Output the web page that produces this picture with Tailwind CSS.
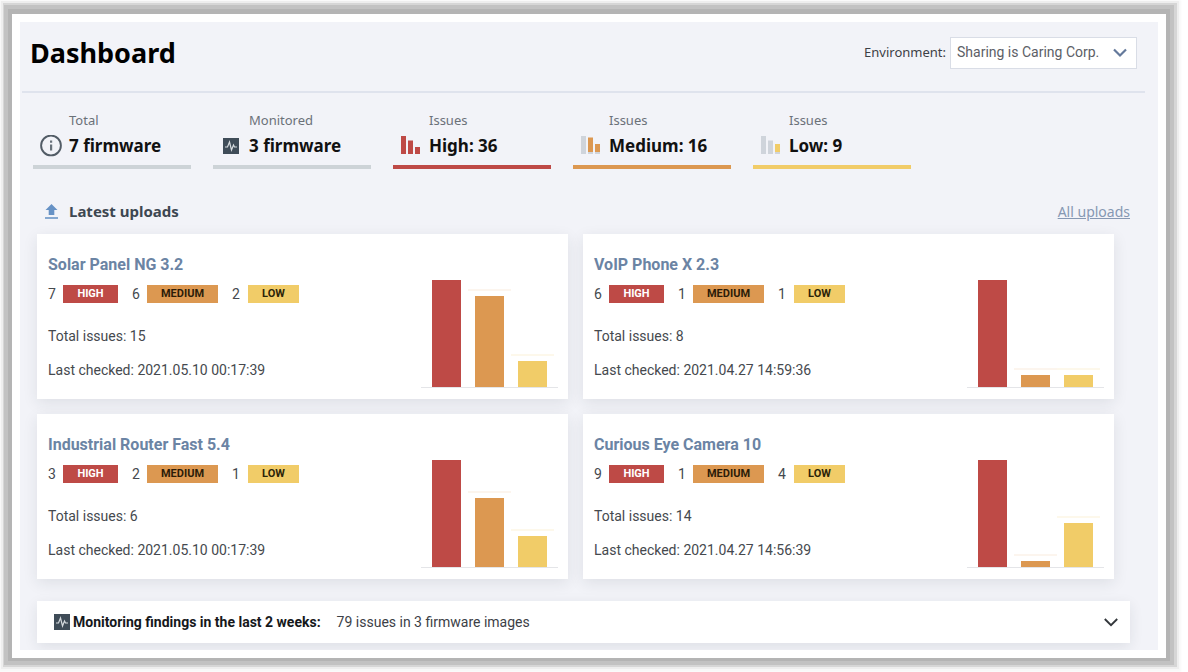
<!DOCTYPE html>
<html lang="en">
<head>
<meta charset="utf-8">
<meta name="viewport" content="width=device-width, initial-scale=1">
<title>Dashboard</title>
<script src="https://cdn.jsdelivr.net/npm/@tailwindcss/browser@4"></script>
</head>
<body class="bg-white font-['Noto_Sans','Open_Sans',sans-serif] text-[#3a4550]">
<div class="mt-[14px] mr-[22px] mb-[14px] ml-3 bg-white p-2 shadow-[0_-1px_0_4px_#b4b4b4,0_-1px_0_8px_#c2c2c2,1px_-1px_0_10px_#d6d6d6,1px_-1px_0_12px_#eeeeee,1px_0_2px_14px_#f8f8f8]">
  <main class="overflow-hidden bg-[#f2f3f8] pb-[7px]">
    <header class="mr-[13px] ml-0.5 flex h-[71px] items-center justify-between border-b-2 border-[#dfe3ed] pr-2 pb-2 pl-2">
      <h1 class="text-[27px] leading-9 font-bold text-black">Dashboard</h1>
      <div class="flex items-center gap-1">
        <label for="env" class="text-[13px] text-[#3c4046]">Environment:</label>
        <div class="relative">
          <select id="env" class="h-8 w-[187px] appearance-none border border-[#d9dde6] bg-white pr-8 pl-1.5 font-[Roboto,sans-serif] text-[14px] text-[#5c6066]">
            <option>Sharing is Caring Corp.</option>
          </select>
          <svg class="pointer-events-none absolute top-[11px] right-2.5 h-2.5 w-[14px]" viewBox="0 0 14 10" fill="none" stroke="#64799b" stroke-width="2.2" aria-hidden="true"><path d="M1 1.5 7 7.5 13 1.5"/></svg>
        </div>
      </div>
    </header>

    <section class="mt-[17px] ml-[13px] flex gap-[22px]" aria-label="Summary">
      <div class="h-[59px] w-[158px] border-b-4 border-[#cdd3d7] pl-9">
        <p class="text-[13px] leading-5 text-[#6b7178]">Total</p>
        <div class="-ml-7 flex h-[31px] items-center">
          <svg class="mr-1.5 -ml-px h-[22px] w-[23px]" viewBox="0 0 23 22" aria-hidden="true"><circle cx="11" cy="10.500" r="9.900" fill="none" stroke="#525c66" stroke-width="1.900"/><path d="M10 5.500H12.200V7.700H10ZM10 9.400H12.200V15.500H10Z" fill="#68727b"/></svg>
          <strong class="text-[17px] text-[#111]">7 firmware</strong>
        </div>
      </div>
      <div class="h-[59px] w-[158px] border-b-4 border-[#cdd3d7] pl-9">
        <p class="text-[13px] leading-5 text-[#6b7178]">Monitored</p>
        <div class="-ml-7 flex h-[31px] items-center">
          <svg class="mr-2.5 ml-0.5 h-4 w-4" viewBox="0 0 16 16" aria-hidden="true"><path fill="#3f4c58" d="M0 0H16V16H0Z"/><path d="M2 9H4.500L6.500 4 8.500 12 10.500 7 11.500 9H14" fill="none" stroke="#d5dade" stroke-width="1.200"/></svg>
          <strong class="text-[17px] text-[#111]">3 firmware</strong>
        </div>
      </div>
      <div class="h-[59px] w-[158px] border-b-4 border-[#be4a46] pl-9">
        <p class="text-[13px] leading-5 text-[#6b7178]">Issues</p>
        <div class="-ml-7 flex h-[31px] items-center">
          <svg class="mr-[9px] h-[19px] w-[19px]" viewBox="0 0 19 19" aria-hidden="true"><path fill="#be4a46" d="M0 0H5V18H0ZM7 4.500H12V18H7ZM14 11H19V18H14Z"/></svg>
          <strong class="text-[17px] text-[#111]">High: 36</strong>
        </div>
      </div>
      <div class="h-[59px] w-[158px] border-b-4 border-[#dc9851] pl-9">
        <p class="text-[13px] leading-5 text-[#6b7178]">Issues</p>
        <div class="-ml-7 flex h-[31px] items-center">
          <svg class="mr-[9px] h-[19px] w-[19px]" viewBox="0 0 19 19" aria-hidden="true"><path fill="#cfd4db" d="M0 0H5V18H0ZM7 4.500H12V18H7ZM14 11H19V18H14Z"/><path fill="#dc9851" d="M7 1.500H12V16H7ZM14 8H19V16H14Z"/></svg>
          <strong class="text-[17px] text-[#111]">Medium: 16</strong>
        </div>
      </div>
      <div class="h-[59px] w-[158px] border-b-4 border-[#f1cc68] pl-9">
        <p class="text-[13px] leading-5 text-[#6b7178]">Issues</p>
        <div class="-ml-7 flex h-[31px] items-center">
          <svg class="mr-[9px] h-[19px] w-[19px]" viewBox="0 0 19 19" aria-hidden="true"><path fill="#cfd4db" d="M0 0H5V18H0ZM7 4.500H12V18H7ZM14 11H19V18H14Z"/><path fill="#f1cc68" d="M14 8H19V16H14Z"/></svg>
          <strong class="text-[17px] text-[#111]">Low: 9</strong>
        </div>
      </div>
    </section>

    <div class="mt-[30px] mr-7 mb-[11px] ml-[25px] flex h-6 items-center">
      <svg class="h-[15px] w-[13px]" viewBox="0 0 13 15" aria-hidden="true"><path fill="#6792c5" d="M6.500 0 12.500 6H9.300V11H3.700V6H.5Z"/><path fill="#86a8d0" d="M0 13H13V15H0Z"/></svg>
      <h2 class="ml-[11px] text-[15px] font-bold text-[#3d4751]">Latest uploads</h2>
      <a href="#" class="ml-auto text-[14px] text-[#8698b3] underline">All uploads</a>
    </div>

    <section id="cards" class="mr-11 ml-[17px] grid grid-cols-2 gap-[15px] font-[Roboto,sans-serif]" aria-label="Latest uploads"></section>

    <button type="button" class="mt-[22px] mr-7 ml-[17px] flex h-[42px] w-[calc(100%-45px)] items-center bg-white pr-3 pl-[17px] text-left font-[Roboto,sans-serif] text-[14px] text-[#3c4046] shadow-[0_4px_14px_#1f293718]">
      <svg class="h-4 w-4" viewBox="0 0 16 16" aria-hidden="true"><path fill="#3f4c58" d="M0 0H16V16H0Z"/><path d="M2 9H4.500L6.500 4 8.500 12 10.500 7 11.500 9H14" fill="none" stroke="#d5dade" stroke-width="1.200"/></svg>
      <strong class="ml-[3px] text-[#15181b]">Monitoring findings in the last 2 weeks:</strong>
      <span class="ml-4">79 issues in 3 firmware images</span>
      <svg class="ml-auto h-[9px] w-[14px]" viewBox="0 0 14 9" fill="none" stroke="#33373b" stroke-width="1.900" aria-hidden="true"><path d="M.8 1 7 7.200 13.200 1"/></svg>
    </button>
  </main>
</div>

<template id="card">
  <article class="flex h-[165px] items-end justify-between bg-white pr-2.5 pl-[11px] shadow-[0_4px_14px_#1f293718]">
    <div class="self-start pt-[19px] text-[14px] leading-6 text-[#45494e]">
      <h3 class="text-[16px] leading-6 font-bold text-[#6b84a4]"><a href="#" data-f="name"></a></h3>
      <div class="mt-2 flex h-[18px] items-center">
        <span class="w-[15px]" data-f="high"></span><span class="h-[18px] w-[55px] bg-[#be4a46] text-center text-[11px] leading-[18px] font-bold text-white">HIGH</span>
        <span class="ml-[14px] w-[15px]" data-f="medium"></span><span class="h-[18px] w-[71px] bg-[#dc9851] text-center text-[11px] leading-[18px] font-bold text-[#2c1c08]">MEDIUM</span>
        <span class="ml-[14px] w-4" data-f="low"></span><span class="h-[18px] w-[51px] bg-[#f1cc68] text-center text-[11px] leading-[18px] font-bold text-[#2c2408]">LOW</span>
      </div>
      <p class="mt-[21px]">Total issues: <span data-f="total"></span></p>
      <p class="mt-2.5">Last checked: <span data-f="checked"></span></p>
    </div>
    <div class="mb-[11px] flex h-[120px] w-[137px] items-end justify-center border-b border-[#e4e5e8]" aria-hidden="true">
      <div class="flex w-[43px] justify-center"><div data-bar class="w-[29px] bg-[#be4a46]"></div></div>
      <div class="flex w-[43px] justify-center border-t-2 border-[#fcf5ee] pt-[5px]"><div data-bar class="w-[29px] bg-[#dc9851]"></div></div>
      <div class="flex w-[43px] justify-center border-t-2 border-[#fdf8eb] pt-[5px]"><div data-bar class="w-[29px] bg-[#f1cc68]"></div></div>
    </div>
  </article>
</template>

<script>
  const uploads = [
    { name: 'Solar Panel NG 3.2', high: 7, medium: 6, low: 2, total: 15, checked: '2021.05.10 00:17:39', bars: [107, 91, 26] },
    { name: 'VoIP Phone X 2.3', high: 6, medium: 1, low: 1, total: 8, checked: '2021.04.27 14:59:36', bars: [107, 12, 12] },
    { name: 'Industrial Router Fast 5.4', high: 3, medium: 2, low: 1, total: 6, checked: '2021.05.10 00:17:39', bars: [107, 69, 31] },
    { name: 'Curious Eye Camera 10', high: 9, medium: 1, low: 4, total: 14, checked: '2021.04.27 14:56:39', bars: [107, 6, 44] }
  ];
  const template = document.getElementById('card');
  for (const u of uploads) {
    const card = template.content.cloneNode(true);
    card.querySelectorAll('[data-f]').forEach(el => { el.textContent = u[el.dataset.f]; });
    card.querySelectorAll('[data-bar]').forEach((el, i) => { el.style.height = u.bars[i] + 'px'; });
    document.getElementById('cards').append(card);
  }
</script>
</body>
</html>
